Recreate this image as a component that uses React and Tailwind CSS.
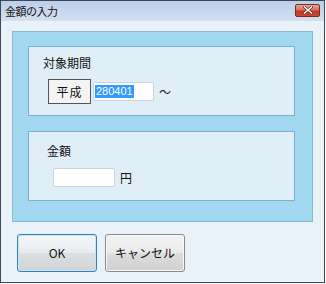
import React from "react";

const jp = { fontFamily: '"Noto Sans CJK JP", "Liberation Sans", sans-serif' };

export default function App() {
  return (
    <div className="w-[326px] h-[284px] bg-white" style={jp}>
      <div className="w-[325px] h-[283px] border border-[#3b4753] bg-[#e9f1f9] flex flex-col">
        {/* title bar */}
        <div className="h-[20px] flex items-center justify-between bg-gradient-to-b from-[#bccfe8] to-[#d3e0f1] pl-[4px] pr-[4px]">
          <span className="text-[11px] leading-none text-[#111] tracking-[-0.5px]">金額の入力</span>
          <div className="w-[25px] h-[13px] mt-[-2px] rounded-[2px] border border-[#7a2a20] bg-[linear-gradient(to_bottom,#e8a597_0%,#d8705e_45%,#c23a26_55%,#c8472f_100%)] flex items-center justify-center">
            <svg width="10" height="8" viewBox="0 0 10 8">
              <path d="M1.5 1 L8.5 7 M8.5 1 L1.5 7" stroke="#5a1a12" strokeWidth="2.6" strokeLinecap="square" />
              <path d="M1.5 1 L8.5 7 M8.5 1 L1.5 7" stroke="#ffffff" strokeWidth="1.5" strokeLinecap="square" />
            </svg>
          </div>
        </div>
        {/* client */}
        <div className="flex-1 flex flex-col pl-[11px] pt-[10px]">
          <div className="w-[301px] h-[191px] border border-[#86b7d3] bg-[#a2d7f0] pl-[15px] pt-[14px] flex flex-col gap-[15px]">
            <div className="w-[267px] h-[70px] border border-[#7daeca] bg-[#dfeef7] pl-[14px] pt-[8px] flex flex-col">
              <span className="text-[12px] leading-[16px] text-[#111]">対象期間</span>
              <div className="flex items-center mt-[8px] ml-[5px]">
                <div className="w-[43px] h-[25px] border border-[#555] bg-[#f4f4f4] flex items-center justify-center text-[12px] text-[#111] tracking-[1px]">平成</div>
                <div className="ml-[2px] w-[61px] h-[19px] bg-white border border-[#c9d6df] rounded-[2px] flex items-center pl-[1px]">
                  <span className="bg-[#3399ff] text-white text-[11px] leading-[13px] px-[1px]" style={{ fontFamily: '"Liberation Sans", sans-serif' }}>280401</span>
                </div>
                <span className="ml-[5px] text-[12px] text-[#222]">～</span>
              </div>
            </div>
            <div className="w-[267px] h-[70px] border border-[#7daeca] bg-[#dfeef7] pl-[18px] pt-[11px] flex flex-col">
              <span className="text-[12px] leading-[16px] text-[#111]">金額</span>
              <div className="flex items-center mt-[9px] ml-[6px]">
                <div className="w-[62px] h-[19px] bg-white border border-[#c9d6df] rounded-[2px]"></div>
                <span className="ml-[5px] text-[12px] text-[#111]">円</span>
              </div>
            </div>
          </div>
          <div className="flex gap-[8px] mt-[12px] ml-[5px]">
            <button className="w-[80px] h-[38px] rounded-[3px] border border-[#3c7fb1] bg-[linear-gradient(to_bottom,#f3f5f7_0%,#eaedf0_48%,#dcdfe2_52%,#d0d4d7_100%)] text-[12px] text-[#111] shadow-[inset_0_0_0_1px_#c4e5f6]" style={jp}>OK</button>
            <button className="w-[80px] h-[38px] rounded-[3px] border border-[#8a8a8a] bg-[linear-gradient(to_bottom,#f2f2f2_0%,#ebebeb_48%,#dddddd_52%,#cfcfcf_100%)] text-[12px] text-[#111] shadow-[inset_0_0_0_1px_#f8f8f8]" style={jp}>キャンセル</button>
          </div>
        </div>
      </div>
    </div>
  );
}
